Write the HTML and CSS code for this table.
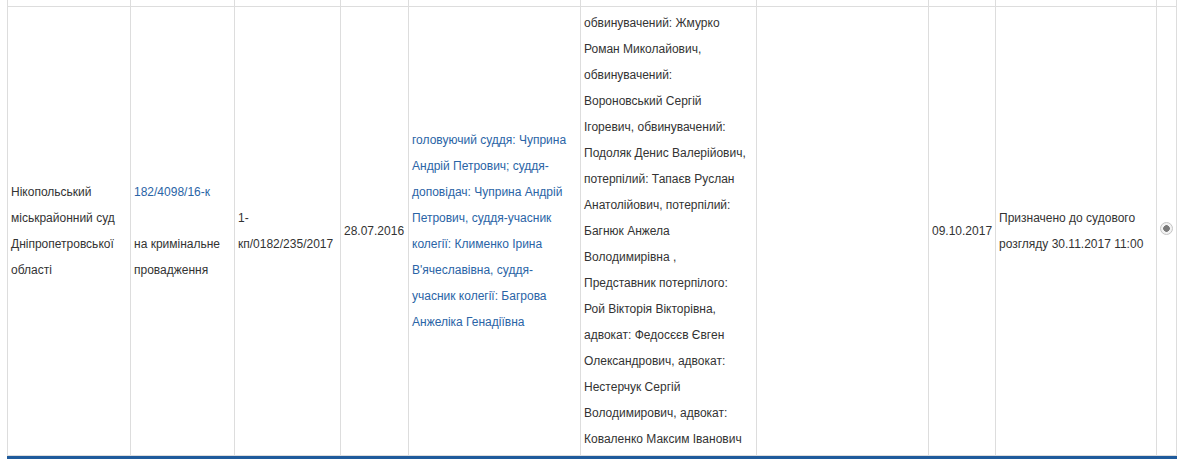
FILE: index.html
```html
<!DOCTYPE html>
<html lang="uk">
<head>
<meta charset="utf-8">
<title>Справи</title>
<link rel="stylesheet" href="styles.css">
</head>
<body>
<div class="wrap">
  <div class="grid">
    <div class="cell stub"></div><div class="cell stub"></div><div class="cell stub"></div><div class="cell stub"></div><div class="cell stub"></div><div class="cell stub"></div><div class="cell stub"></div><div class="cell stub"></div><div class="cell stub"></div><div class="cell stub"></div>

    <div class="cell"><div>Нікопольський міськрайонний суд Дніпропетровської області</div></div>
    <div class="cell"><div><a href="#" class="link">182/4098/16-к</a><br><br>на кримінальне провадження</div></div>
    <div class="cell"><div>1-кп/0182/235/2017</div></div>
    <div class="cell"><div>28.07.2016</div></div>
    <div class="cell"><div class="link">головуючий суддя: Чуприна<br>Андрій Петрович; суддя-<br>доповідач: Чуприна Андрій<br>Петрович, суддя-учасник<br>колегії: Клименко Ірина<br>В'ячеславівна, суддя-<br>учасник колегії: Багрова<br>Анжеліка Генадіївна</div></div>
    <div class="cell"><div>обвинувачений: Жмурко<br>Роман Миколайович,<br>обвинувачений:<br>Вороновський Сергій<br>Ігоревич, обвинувачений:<br>Подоляк Денис Валерійович,<br>потерпілий: Тапаєв Руслан<br>Анатолійович, потерпілий:<br>Багнюк Анжела<br>Володимирівна ,<br>Представник потерпілого:<br>Рой Вікторія Вікторівна,<br>адвокат: Федосєєв Євген<br>Олександрович, адвокат:<br>Нестерчук Сергій<br>Володимирович, адвокат:<br>Коваленко Максим Іванович</div></div>
    <div class="cell"></div>
    <div class="cell"><div>09.10.2017</div></div>
    <div class="cell"><div>Призначено до судового розгляду 30.11.2017 11:00</div></div>
    <div class="cell center"><input type="radio" class="radio" checked disabled></div>
  </div>
  <div class="foot"></div>
</div>
</body>
</html>
```
FILE: styles.css
```css
html, body {
  margin: 0;
  padding: 0;
  background: #fff;
}
body {
  font-family: "Liberation Sans", Arial, sans-serif;
  font-size: 12px;
  line-height: 26px;
  color: #333;
  overflow: hidden;
}
.wrap {
  padding-left: 7px;
}
.grid {
  display: grid;
  grid-template-columns: 123px 104px 106px 68px 172px 176px 172px 67px 161px 20px;
  width: 1170px;
  box-sizing: border-box;
  border-left: 1px solid #ddd;
}
.cell {
  box-sizing: border-box;
  border-right: 1px solid #ddd;
  border-bottom: 1px solid #ddd;
  padding: 3px;
  display: flex;
  align-items: center;
  min-width: 0;
}
.cell > div {
  white-space: normal;
}
.cell.stub {
  height: 7px;
  padding: 0;
}
.cell.center {
  justify-content: center;
}
.link {
  color: #2a64a6;
  text-decoration: none;
}
.radio {
  appearance: none;
  -webkit-appearance: none;
  width: 13px;
  height: 13px;
  margin: 0 0 5px 0;
  border: 1px solid #c4c4c4;
  border-radius: 50%;
  box-sizing: border-box;
  background: radial-gradient(circle, #7a7a7a 0, #7a7a7a 3px, #f2f2f2 3.6px);
}
.foot {
  width: 1170px;
  height: 8px;
  background: #1f5b9c;
}
```
